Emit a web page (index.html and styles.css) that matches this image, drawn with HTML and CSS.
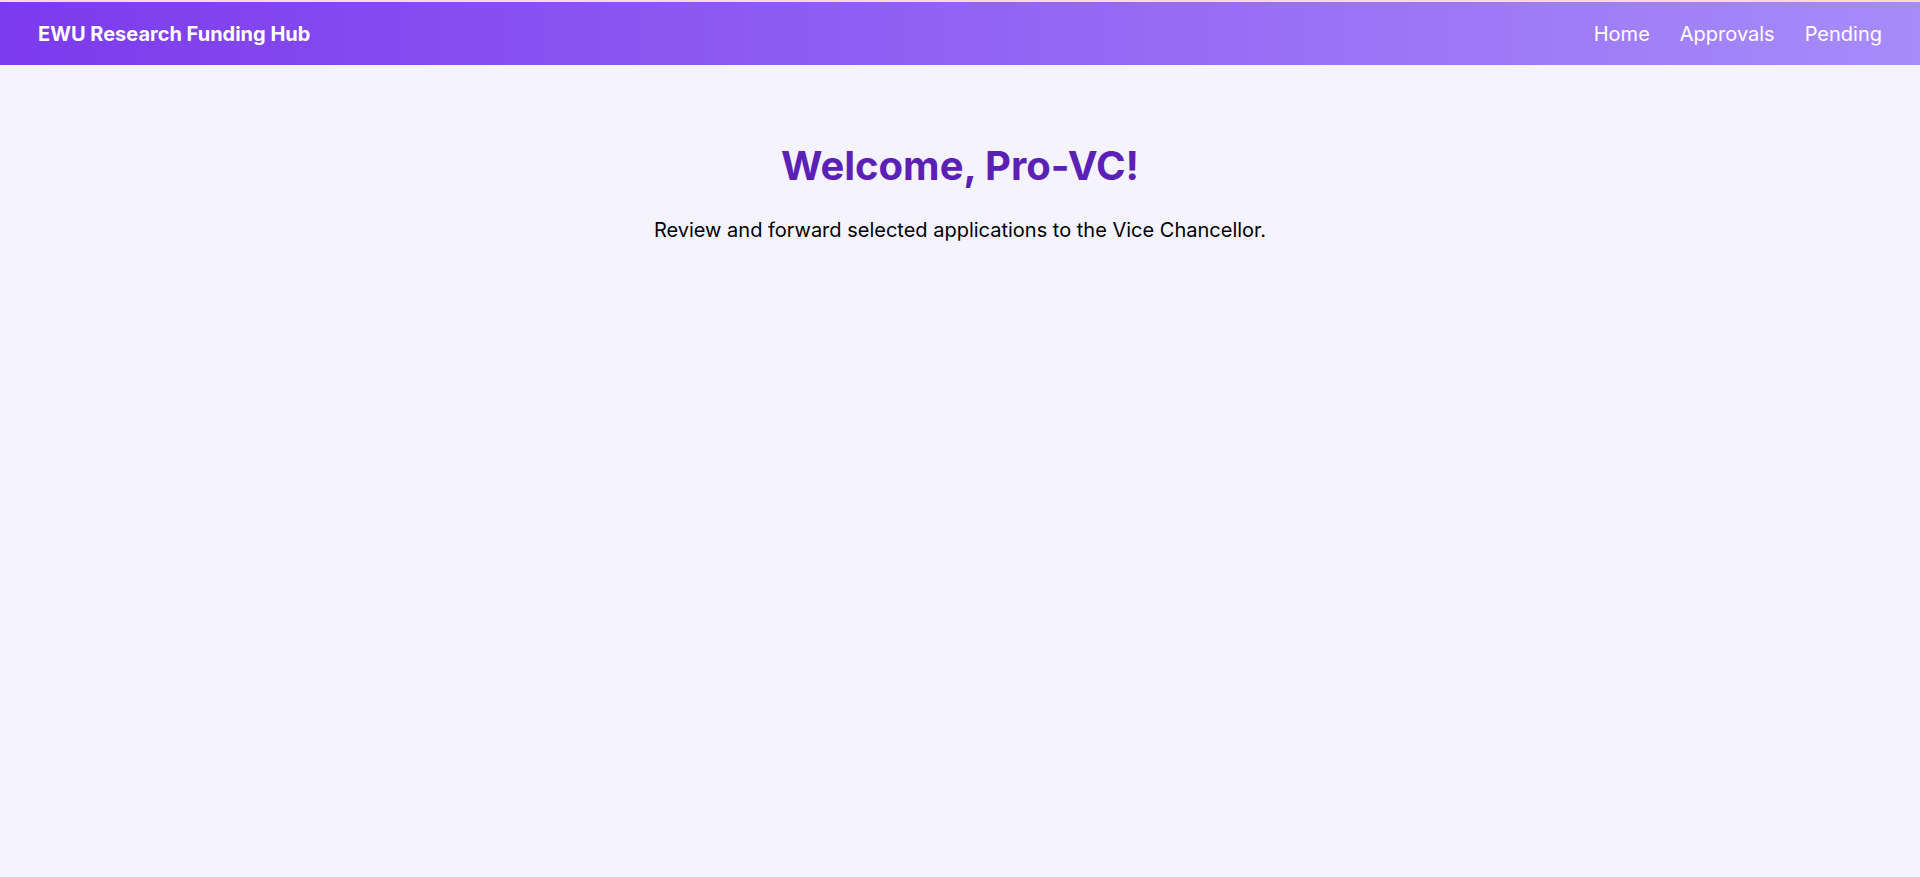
FILE: index.html
```html
<!DOCTYPE html>
<html lang="en">
<head>
<meta charset="utf-8">
<title>EWU Research Funding Hub</title>
<link rel="stylesheet" href="styles.css">
</head>
<body>
<div class="top-strip"></div>
<nav class="navbar">
  <div class="brand">EWU Research Funding Hub</div>
  <div class="nav-links">
    <a class="nav-link" href="#">Home</a>
    <a class="nav-link" href="#">Approvals</a>
    <a class="nav-link" href="#">Pending</a>
  </div>
</nav>
<main class="content">
  <h1 class="title">Welcome, Pro-VC!</h1>
  <p class="subtitle">Review and forward selected applications to the Vice Chancellor.</p>
</main>
</body>
</html>
```

FILE: styles.css
```css
* { box-sizing: border-box; }
html, body {
  margin: 0;
  padding: 0;
  background: #f5f3ff;
  font-family: Inter, "Noto Sans", sans-serif;
  min-height: 100%;
}
.top-strip {
  height: 2px;
  background: #f9dccb;
}
.navbar {
  height: 63px;
  display: flex;
  align-items: center;
  justify-content: space-between;
  padding: 0 38px;
  background: linear-gradient(to right, #7c3aed, #a78bfa);
  color: #ffffff;
}
.brand {
  font-size: 20px;
  font-weight: 700;
}
.nav-links {
  display: flex;
  gap: 30px;
}
.nav-link {
  color: #ffffff;
  text-decoration: none;
  font-size: 20px;
}
.content {
  text-align: center;
  padding-top: 76px;
}
.title {
  margin: 0;
  font-size: 40px;
  font-weight: 700;
  color: #5b21b6;
}
.subtitle {
  margin: 28px 0 0;
  font-size: 20px;
  color: #000000;
}
```
